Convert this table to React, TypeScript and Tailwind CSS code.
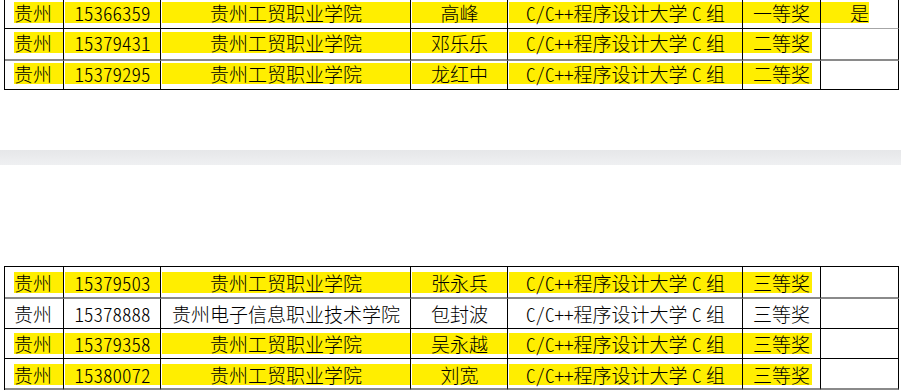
import React from 'react';

type RowDef = {
  cells: string[];
  hl: boolean;
  h: string;
  pt: string;
  line: string;
  lastLine?: string;
};

const topRows: RowDef[] = [
  { cells: ['贵州', '15366359', '贵州工贸职业学院', '高峰', 'C/C++程序设计大学 C 组', '一等奖', '是'], hl: true, h: 'h-[29px]', pt: 'pt-[2px]', line: 'border-b border-black', lastLine: 'border-b border-[#a6a6a6]' },
  { cells: ['贵州', '15379431', '贵州工贸职业学院', '邓乐乐', 'C/C++程序设计大学 C 组', '二等奖', ''], hl: true, h: 'h-[32px]', pt: 'pt-[3px]', line: 'border-b-2 border-[#8a8a8a]' },
  { cells: ['贵州', '15379295', '贵州工贸职业学院', '龙红中', 'C/C++程序设计大学 C 组', '二等奖', ''], hl: true, h: 'h-[29px]', pt: 'pt-[2px]', line: 'border-b border-black' },
];

const bottomRows: RowDef[] = [
  { cells: ['贵州', '15379503', '贵州工贸职业学院', '张永兵', 'C/C++程序设计大学 C 组', '三等奖', ''], hl: true, h: 'h-[32px]', pt: 'pt-[5px]', line: 'border-b-2 border-[#8a8a8a]' },
  { cells: ['贵州', '15378888', '贵州电子信息职业技术学院', '包封波', 'C/C++程序设计大学 C 组', '三等奖', ''], hl: false, h: 'h-[30px]', pt: 'pt-[4px]', line: 'border-b border-black' },
  { cells: ['贵州', '15379358', '贵州工贸职业学院', '吴永越', 'C/C++程序设计大学 C 组', '三等奖', ''], hl: true, h: 'h-[30px]', pt: 'pt-[4px]', line: 'border-b border-black' },
  { cells: ['贵州', '15380072', '贵州工贸职业学院', '刘宽', 'C/C++程序设计大学 C 组', '三等奖', ''], hl: true, h: 'h-[31px]', pt: 'pt-[5px]', line: 'border-b-2 border-[#8a8a8a]' },
];

function yellowBox(col: number, text: string) {
  if (col === 0) return 'ml-[9px] justify-start';
  if (col === 4) return 'ml-px justify-center [word-spacing:-5px]';
  if (col === 5) return text === '一等奖' ? 'justify-center' : 'mr-[8px] pl-[8px] justify-center';
  if (col === 6) return 'w-[48px] justify-end';
  return 'ml-px justify-center';
}

function Row({ r }: { r: RowDef }) {
  return (
    <div className="grid grid-cols-[59px_97px_250px_97px_235px_78px_78px] border-l border-black">
      {r.cells.map((c, i) => {
        const line = i === 6 && r.lastLine ? r.lastLine : r.line;
        const on = r.hl && c !== '';
        return (
          <div key={i} className={`border-r border-r-black ${line} ${r.h} ${r.pt} flex flex-col`}>
            <div className={`h-[21px] flex items-center leading-[21px] whitespace-pre ${yellowBox(i, c)} ${on ? 'bg-[#ffee00]' : ''}`}>
              {c}
            </div>
          </div>
        );
      })}
    </div>
  );
}

export default function App() {
  return (
    <div className="w-[901px] h-[390px] overflow-hidden bg-white text-black font-['Noto_Sans_CJK_SC',sans-serif] font-light text-[19px] [font-feature-settings:'hwid']">
      <div className="ml-[4px] w-[895px]">
        {topRows.map((r, i) => (
          <Row key={i} r={r} />
        ))}
      </div>

      <div className="mt-[60px] h-[15px] bg-gradient-to-b from-[#e6e7e9] to-[#eff0f2]" />

      <div className="mt-[101px] ml-[4px] w-[895px] border-t border-black">
        {bottomRows.map((r, i) => (
          <Row key={i} r={r} />
        ))}
      </div>
    </div>
  );
}
